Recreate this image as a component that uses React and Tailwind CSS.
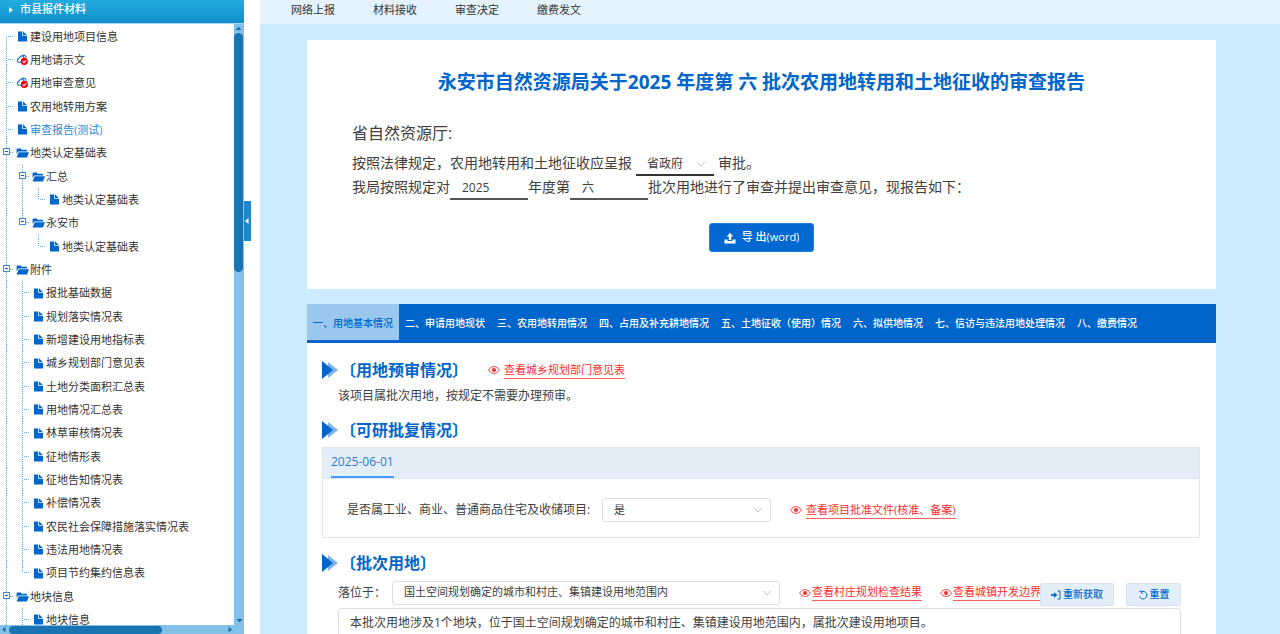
import React, { useState } from "react";

// guides: one flag per ancestor column, true when the dotted line runs through
const TREE = [
  { label: "建设用地项目信息", icon: "file", guides: [], first: true },
  { label: "用地请示文", icon: "linked", guides: [] },
  { label: "用地审查意见", icon: "linked", guides: [] },
  { label: "农用地转用方案", icon: "file", guides: [] },
  { label: "审查报告(测试)", icon: "file", guides: [], active: true },
  { label: "地类认定基础表", icon: "folder", guides: [] },
  { label: "汇总", icon: "folder", guides: [true] },
  { label: "地类认定基础表", icon: "file", guides: [true, true], last: true },
  { label: "永安市", icon: "folder", guides: [true], last: true },
  { label: "地类认定基础表", icon: "file", guides: [true, false], last: true },
  { label: "附件", icon: "folder", guides: [] },
  { label: "报批基础数据", icon: "file", guides: [true] },
  { label: "规划落实情况表", icon: "file", guides: [true] },
  { label: "新增建设用地指标表", icon: "file", guides: [true] },
  { label: "城乡规划部门意见表", icon: "file", guides: [true] },
  { label: "土地分类面积汇总表", icon: "file", guides: [true] },
  { label: "用地情况汇总表", icon: "file", guides: [true] },
  { label: "林草审核情况表", icon: "file", guides: [true] },
  { label: "征地情形表", icon: "file", guides: [true] },
  { label: "征地告知情况表", icon: "file", guides: [true] },
  { label: "补偿情况表", icon: "file", guides: [true] },
  { label: "农民社会保障措施落实情况表", icon: "file", guides: [true] },
  { label: "违法用地情况表", icon: "file", guides: [true] },
  { label: "项目节约集约信息表", icon: "file", guides: [true], last: true },
  { label: "地块信息", icon: "folder", guides: [] },
  { label: "地块信息", icon: "file", guides: [true] },
];

const NAV = ["网络上报", "材料接收", "审查决定", "缴费发文"];

const TABS = [
  "一、用地基本情况",
  "二、申请用地现状",
  "三、农用地转用情况",
  "四、占用及补充耕地情况",
  "五、土地征收（使用）情况",
  "六、拟供地情况",
  "七、信访与违法用地处理情况",
  "八、缴费情况",
];

function DottedLine(props) {
  return <line stroke="#6aa6de" strokeWidth="1" strokeDasharray="1 1" {...props} />;
}

function GuideCell({ through }) {
  return (
    <svg className="h-full w-4 shrink-0" aria-hidden="true">
      {through && <DottedLine x1="6.5" x2="6.5" y1="0" y2="100%" />}
    </svg>
  );
}

function NodeCell({ node }) {
  return (
    <svg className="h-full w-4 shrink-0" aria-hidden="true">
      <DottedLine x1="6.5" x2="6.5" y1={node.first ? "50%" : "0"} y2={node.last ? "50%" : "100%"} />
      <DottedLine x1="8" x2="14" y1="11.5" y2="11.5" />
      {node.icon === "folder" && (
        <g>
          <rect x="3.5" y="7.5" width="6" height="6" fill="#fff" stroke="#3d8bd6" />
          <path d="M5 10.5h3" stroke="#06c" />
        </g>
      )}
    </svg>
  );
}

function FileIcon() {
  return (
    <svg viewBox="0 0 9 11" className="h-[11px] w-[9px]" fill="#0066cc" aria-hidden="true">
      <path d="M0 .5h4.200v4.300H9V10.600H0z" />
      <path d="M5 .3 8.700 4H5z" />
    </svg>
  );
}

function FolderIcon() {
  return (
    <svg viewBox="0 0 13 10" className="h-2.5 w-[13px]" fill="#0066cc" aria-hidden="true">
      <path d="M.6 1.200Q.6.5 1.300.5H4.600L5.800 1.700H10.300Q11 1.700 11 2.400V3.400H2.400L.6 6z" />
      <path d="M2.800 4.200H13L11.200 9.100Q11 9.600 10.400 9.600H1.300Q.5 9.600.7 8.900z" />
    </svg>
  );
}

function LinkedIcon() {
  return (
    <svg viewBox="0 0 14 14" className="h-3.5 w-3.5" aria-hidden="true">
      <g fill="none" stroke="#1a6fd0" strokeWidth="1.200">
        <rect x="1" y="4" width="8" height="4.400" rx="2.200" transform="rotate(-45 5 6.200)" />
        <path d="M6.500 2.600a2.500 2.500 0 0 1 4.300 2.200" />
      </g>
      <circle cx="9" cy="8.500" r="3.800" fill="#f5000c" />
      <path d="M7.200 8.500l1.400 1.400 2.300-2.500" fill="none" stroke="#fff" strokeWidth="1.100" />
    </svg>
  );
}

function NodeIcon({ type }) {
  if (type === "folder") return <FolderIcon />;
  if (type === "linked") return <LinkedIcon />;
  return <FileIcon />;
}

function EyeIcon() {
  return (
    <svg viewBox="0 0 12 12" className="h-3 w-3 shrink-0" aria-hidden="true">
      <path d="M.6 6C2 3.700 3.800 2.600 6 2.600S10 3.700 11.400 6C10 8.300 8.200 9.400 6 9.400S2 8.300.6 6z" fill="none" stroke="currentColor" strokeWidth=".9" />
      <circle cx="6" cy="6" r="2" fill="currentColor" />
    </svg>
  );
}

function UploadIcon() {
  return (
    <svg viewBox="0 0 12 12" className="h-3 w-3" fill="currentColor" aria-hidden="true">
      <path d="M6 .8 9.200 4.400H7.200V8H4.800V4.400H2.800z" />
      <path d="M.5 7.500h3v1.600h5V7.500h3v4H.5z" />
    </svg>
  );
}

function Chevron() {
  return (
    <svg viewBox="0 0 10 10" className="pointer-events-none absolute right-2 h-2.5 w-2.5" aria-hidden="true">
      <path d="M1 3l4 4 4-4" fill="none" stroke="#c0c4cc" strokeWidth="1" />
    </svg>
  );
}

function ViewLink({ children, tight }) {
  return (
    <a href="#" className={`flex shrink-0 items-center text-[11px] text-[#ff2d2d] ${tight ? "gap-px" : "gap-1"}`}>
      <EyeIcon />
      <span className="border-b border-[#ff5c5c] leading-4">{children}</span>
    </a>
  );
}

function SectionTitle({ children }) {
  return (
    <h2 className="flex items-center gap-0.5 text-base leading-6 font-bold text-[#0066cc]">
      <svg viewBox="0 0 16 18" className="h-[18px] w-4" aria-hidden="true">
        <path d="M6 1l10 8-10 8z" fill="#80b3e8" />
        <path d="M0 0l11 9-11 9z" fill="#0066cc" />
      </svg>
      {children}
    </h2>
  );
}

function Sidebar() {
  return (
    <aside className="flex w-[244px] shrink-0 flex-col bg-white">
      <header className="flex h-6 shrink-0 items-center gap-1.5 border-b border-[#a9d7f2] bg-linear-to-b from-[#22acdf] to-[#108fcb] pb-1 pl-2 text-[11px] font-medium text-white">
        <svg viewBox="0 0 6 8" className="h-2 w-1.5" aria-hidden="true">
          <path d="M1 1l4 3-4 3z" fill="#fff" />
        </svg>
        市县报件材料
      </header>
      <div className="flex min-h-0 flex-1">
        <ul className="min-w-0 flex-1 overflow-hidden pt-px">
          {TREE.map((node, i) => (
            <li key={i} className="flex h-[23px] items-center nth-[3n]:h-6">
              {node.guides.map((through, g) => (
                <GuideCell key={g} through={through} />
              ))}
              <NodeCell node={node} />
              <span className="flex w-3.5 shrink-0 justify-center pr-px">
                <NodeIcon type={node.icon} />
              </span>
              <a href="#" className={`text-[11px] leading-4 whitespace-nowrap ${node.active ? "text-[#2a8ad4]" : "text-[#333]"}`}>
                {node.label}
              </a>
            </li>
          ))}
        </ul>
        <div className="flex w-2.5 flex-col items-center justify-between bg-[#84c1e8]">
          <div className="flex w-full flex-col">
            <svg viewBox="0 0 9 9" className="h-[9px] w-[9px]" aria-hidden="true">
              <path d="M1.500 6h6l-3-3.500z" fill="#1974b1" />
            </svg>
            <div className="h-[239px] w-[9px] rounded-full bg-[#1974b1]" />
          </div>
          <svg viewBox="0 0 9 9" className="h-[9px] w-[9px]" aria-hidden="true">
            <path d="M1.500 3h6l-3 3.500z" fill="#1974b1" />
          </svg>
        </div>
      </div>
      <div className="flex h-[9px] shrink-0 items-center justify-between bg-[#84c1e8] pr-2.5">
        <div className="flex items-center">
          <svg viewBox="0 0 9 9" className="h-[9px] w-[9px]" aria-hidden="true">
            <path d="M5.500 1.500v6L2 4.500z" fill="#1974b1" />
          </svg>
          <div className="h-2 w-[153px] rounded-full bg-[#1974b1]" />
        </div>
        <svg viewBox="0 0 9 9" className="h-[9px] w-[9px]" aria-hidden="true">
          <path d="M3.500 1.500v6L7 4.500z" fill="#1974b1" />
        </svg>
      </div>
    </aside>
  );
}

function ReportCard() {
  const [approver, setApprover] = useState("省政府");
  const [year, setYear] = useState("2025");
  const [batch, setBatch] = useState("六");

  return (
    <section className="bg-white pt-7 pb-[37px]">
      <h1 className="text-center text-[19px] leading-7 font-bold text-[#0066cc]">
        永安市自然资源局关于2025 年度第 六 批次农用地转用和土地征收的审查报告
      </h1>
      <div className="pt-[25px] pl-[45px] text-sm text-[#404040]">
        <p className="text-base leading-6">省自然资源厅:</p>
        <div className="mt-[7px] flex h-6 items-center gap-1">
          <label htmlFor="approver" className="pb-0.5">按照法律规定，农用地转用和土地征收应呈报</label>
          <span className="relative flex h-6 items-center">
            <select
              id="approver"
              value={approver}
              onChange={(e) => setApprover(e.target.value)}
              className="h-full w-[78px] appearance-none border-b-2 border-[#333] pt-0.5 pl-[11px] text-xs"
            >
              <option>省政府</option>
              <option>国务院</option>
            </select>
            <Chevron />
          </span>
          <span className="pb-0.5">审批。</span>
        </div>
        <div className="flex h-6 items-center">
          <label htmlFor="year" className="pb-0.5">我局按照规定对</label>
          <input
            id="year"
            value={year}
            onChange={(e) => setYear(e.target.value)}
            className="h-full w-[78px] border-b-2 border-[#555] px-3 text-xs"
          />
          <label htmlFor="batch" className="pb-0.5">年度第</label>
          <input
            id="batch"
            value={batch}
            onChange={(e) => setBatch(e.target.value)}
            className="h-full w-[78px] border-b-2 border-[#555] px-3 text-xs"
          />
          <span className="pb-0.5">批次用地进行了审查并提出审查意见，现报告如下：</span>
        </div>
      </div>
      <div className="mt-[23px] flex justify-center">
        <button className="flex h-[29px] w-[105px] items-center justify-center gap-1.5 rounded-[3px] border border-[#2080e0] bg-[#0068d0] text-[11px] font-medium text-white">
          <UploadIcon />
          导 出(word)
        </button>
      </div>
    </section>
  );
}

function Details() {
  return (
    <div className="px-[15px] pt-[15px] text-xs text-[#404040]">
      <div className="flex items-center gap-5">
        <SectionTitle>〔用地预审情况〕</SectionTitle>
        <ViewLink>查看城乡规划部门意见表</ViewLink>
      </div>
      <p className="mt-0.5 pl-4 leading-6">该项目属批次用地，按规定不需要办理预审。</p>
      <div className="mt-2.5">
        <SectionTitle>〔可研批复情况〕</SectionTitle>
      </div>

      <div className="mt-[5px] mr-px border border-[#dfe4ed]">
        <div className="flex h-[31px] border-b border-[#dfe4ed] bg-[#e4eef9] pl-2">
          <button className="border-b-2 border-[#409eff] text-xs text-[#2b7bd6]">2025-06-01</button>
        </div>
        <div className="flex h-[58px] items-center pt-1 pl-6">
          <label htmlFor="industry" className="w-[255px] shrink-0">是否属工业、商业、普通商品住宅及收储项目:</label>
          <span className="relative mr-[19px] flex items-center">
            <select id="industry" className="h-6 w-[169px] appearance-none rounded-[3px] border border-[#dcdfe6] pl-[11px] text-[11px]">
              <option>是</option>
              <option>否</option>
            </select>
            <Chevron />
          </span>
          <ViewLink>查看项目批准文件(核准、备案)</ViewLink>
        </div>
      </div>

      <div className="mt-[13px]">
        <SectionTitle>〔批次用地〕</SectionTitle>
      </div>
      <div className="pr-5 pl-4">
        <div className="flex items-center pt-1">
          <label htmlFor="location" className="w-[54px] shrink-0">落位于：</label>
          <span className="relative mr-[19px] flex items-center">
            <select id="location" className="h-6 w-[388px] appearance-none rounded-[3px] border border-[#dcdfe6] pl-[11px] text-[11px]">
              <option>国土空间规划确定的城市和村庄、集镇建设用地范围内</option>
            </select>
            <Chevron />
          </span>
          <div className="flex min-w-0 flex-1 gap-[18px] overflow-hidden">
            <ViewLink tight>查看村庄规划检查结果</ViewLink>
            <ViewLink tight>查看城镇开发边界</ViewLink>
          </div>
          <div className="flex shrink-0 gap-3 pt-1 text-[10px] font-medium text-[#0068cf]">
            <button className="flex h-[23px] w-[74px] items-center justify-center gap-0.5 rounded-xs border border-[#d5e2f0] bg-[#e4eef9]">
              <svg viewBox="0 0 10 10" className="h-2.5 w-2.5" fill="none" stroke="currentColor" aria-hidden="true">
                <path d="M0 5h4" strokeWidth="1.800" />
                <path d="M3 2.200 6.500 5 3 7.800z" fill="currentColor" stroke="none" />
                <path d="M6.500 1h2.500v8H6.500" />
              </svg>
              重新获取
            </button>
            <button className="flex h-[23px] w-[55px] items-center justify-center gap-0.5 rounded-xs border border-[#d5e2f0] bg-[#e4eef9]">
              <svg viewBox="0 0 10 10" className="h-2.5 w-2.5" fill="none" stroke="currentColor" aria-hidden="true">
                <path d="M3.300 1.800A3.800 3.800 0 1 1 1.500 6.500" />
                <path d="M1.300 1.300h2.500v2.500" />
              </svg>
              重置
            </button>
          </div>
        </div>
        <textarea
          aria-label="批次用地说明"
          rows={3}
          defaultValue="本批次用地涉及1个地块，位于国土空间规划确定的城市和村庄、集镇建设用地范围内，属批次建设用地项目。"
          className="mt-0.5 block w-full resize-none rounded-[3px] border border-[#dcdfe6] px-[11px] py-1 leading-5"
        />
      </div>
    </div>
  );
}

function App() {
  const [tab, setTab] = useState(0);

  return (
    <div className="flex h-screen overflow-hidden bg-white font-['Open_Sans','Noto_Sans_CJK_SC',sans-serif]">
      <Sidebar />
      <div className="w-4 shrink-0 pt-[201px]">
        <button aria-label="收起" className="flex h-10 w-[7px] items-center bg-[#1f87ca]">
          <svg viewBox="0 0 5 8" className="h-2 w-[5px]" aria-hidden="true">
            <path d="M4.500 1v6L1 4z" fill="#fff" />
          </svg>
        </button>
      </div>

      <main className="flex min-w-0 flex-1 flex-col bg-[#cbecff]">
        <nav className="flex h-6 shrink-0 items-center gap-[38px] bg-[#e5f3ff] pb-1 pl-[31px] text-[11px] text-[#333]">
          {NAV.map((item) => (
            <a key={item} href="#">{item}</a>
          ))}
        </nav>
        <div className="flex min-h-0 flex-1 flex-col gap-[15px] overflow-hidden pt-4 pr-16 pl-[47px]">
          <ReportCard />
          <section className="flex-1 bg-white">
            <div className="flex h-[39px] bg-[#0066cc]">
              {TABS.map((name, i) => (
                <button
                  key={name}
                  onClick={() => setTab(i)}
                  className={`h-9 px-1.5 pt-0.5 text-[10px] font-medium whitespace-nowrap ${
                    i === tab ? "bg-[#99c7ee] text-[#0066cc]" : "text-white"
                  }`}
                >
                  {name}
                </button>
              ))}
            </div>
            <Details />
          </section>
        </div>
      </main>
    </div>
  );
}

export default App;
